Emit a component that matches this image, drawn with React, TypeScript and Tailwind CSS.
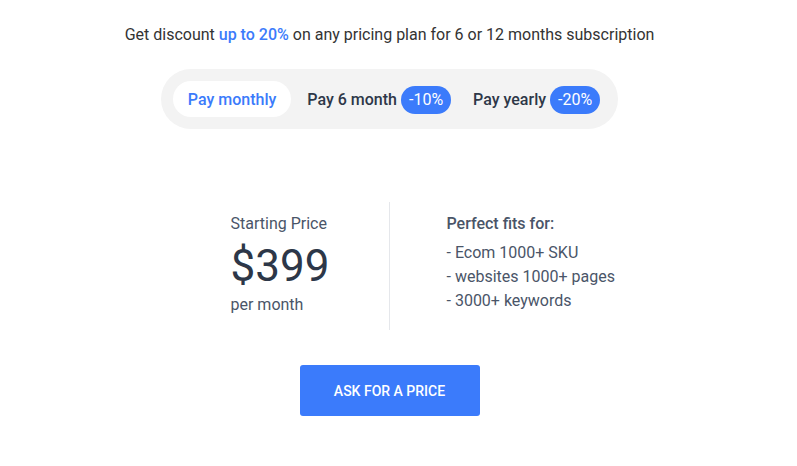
import React, { useState } from 'react'

const plans = [
  { value: 'monthly', label: 'Pay monthly', badge: '' },
  { value: 'six', label: 'Pay 6 month', badge: '-10%' },
  { value: 'yearly', label: 'Pay yearly', badge: '-20%' },
]

const fits = ['- Ecom 1000+ SKU', '- websites 1000+ pages', '- 3000+ keywords']

export default function App() {
  const [plan, setPlan] = useState('monthly')

  return (
    <div className="min-h-screen bg-white font-['Roboto',sans-serif] text-[#2d3748]">
      <div className="flex flex-col items-center pr-[18px] pt-6">
        {/* Discount note */}
        <p className="text-base leading-[22px] text-[#333]">
          Get discount <span className="font-medium text-[#3b7bfb]">up to 20%</span> on any
          pricing plan for 6 or 12 months subscription
        </p>

        {/* Billing period switch */}
        <div className="mt-[23px] flex h-[60px] items-center rounded-full bg-[#f3f3f3] pl-3 pr-[18px]">
          {plans.map((p, i) => (
            <button
              key={p.value}
              onClick={() => setPlan(p.value)}
              className={`flex h-9 items-center gap-1 rounded-full pt-px text-base font-medium ${
                i === 1 ? 'ml-4' : i === 2 ? 'ml-[22px]' : ''
              } ${
                plan === p.value
                  ? 'bg-white px-[15px] text-[#3b7bfb]'
                  : 'text-[#2d3748]'
              }`}
            >
              {p.label}
              {p.badge && (
                <span className="flex h-7 items-center rounded-full bg-[#3b7bfb] px-2 font-normal text-white">
                  {p.badge}
                </span>
              )}
            </button>
          ))}
        </div>

        {/* Price block */}
        <div className="mt-[73px] grid w-[360px] grid-cols-2">
          <div className="border-r border-[#e5e7eb] pb-[14px] pl-[21px] pt-[11px]">
            <div className="text-base leading-[22px] text-[#4a5568]">Starting Price</div>
            <div className="mt-[6px] text-[44px] leading-[50px] text-[#2d3748]">$399</div>
            <div className="mt-[3px] text-base leading-[22px] text-[#4a5568]">per month</div>
          </div>
          <div className="whitespace-nowrap pl-[57px] pt-[11px]">
            <div className="text-base font-medium leading-[22px] text-[#4a5568]">
              Perfect fits for:
            </div>
            <ul className="mt-[6px]">
              {fits.map((f) => (
                <li key={f} className="text-base leading-6 text-[#4a5568]">
                  {f}
                </li>
              ))}
            </ul>
          </div>
        </div>

        <button className="mt-[35px] h-[51px] w-[180px] rounded-[3px] bg-[#3b7bfb] text-sm font-medium text-white">
          ASK FOR A PRICE
        </button>
      </div>
    </div>
  )
}
